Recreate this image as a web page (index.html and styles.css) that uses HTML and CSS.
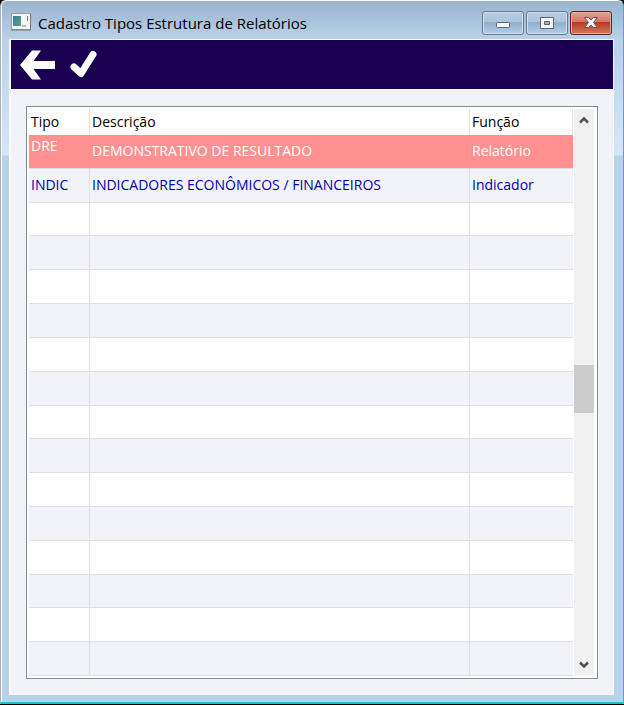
FILE: index.html
```html
<!DOCTYPE html>
<html lang="pt-BR">
<head>
<meta charset="utf-8">
<title>Cadastro Tipos Estrutura de Relatórios</title>
<link rel="stylesheet" href="styles.css">
</head>
<body>
<div class="window">
  <header class="titlebar">
    <svg class="app-icon" width="20" height="18" viewBox="0 0 20 18" aria-hidden="true">
      <rect x="0.5" y="0.5" width="19" height="16" fill="#f4f6f6" stroke="#9a9ea2"/>
      <path d="M0 17h20M19.500 1v16" stroke="#74787c"/>
      <defs><linearGradient id="pic" x2="1" y2="1"><stop stop-color="#3c78a0"/><stop offset="1" stop-color="#58a878"/></linearGradient></defs>
      <rect x="2" y="3" width="8" height="10" fill="url(#pic)"/>
      <path d="M16.500 3v5" stroke="#3f8fa0"/>
      <path d="M11 13h4" stroke="#b9bdbd" stroke-width="2"/>
    </svg>
    <h1 class="title">Cadastro Tipos Estrutura de Relatórios</h1>
    <div class="controls">
      <button class="control" aria-label="Minimizar">
        <svg width="16" height="14" viewBox="0 0 16 14"><rect x="1.500" y="6.500" width="13" height="5" rx="1" fill="#f5f5f5" stroke="#596675"/></svg>
      </button>
      <button class="control" aria-label="Maximizar">
        <svg width="16" height="14" viewBox="0 0 16 14"><path fill-rule="evenodd" d="M1.500 1.500h13v11h-13zM5.500 5.500v3h5v-3z" fill="#f5f5f5" stroke="#596675"/></svg>
      </button>
      <button class="control close" aria-label="Fechar">
        <svg width="16" height="14" viewBox="0 0 16 14"><path d="M1.500 1.500h4L8 4l2.500-2.500h4L10.500 6.500l4 5h-4L8 9l-2.500 2.500h-4l4-5z" fill="#f7f5f5" stroke="#62545c"/></svg>
      </button>
    </div>
  </header>
  <main class="client">
    <nav class="toolbar">
      <button class="tool" aria-label="Voltar">
        <svg width="36" height="30" viewBox="0 0 36 30"><path d="M0 15 12 .5h9L13.500 11H35v8H13.500L21 29.500h-9z" fill="#fff"/></svg>
      </button>
      <button class="tool" aria-label="Confirmar">
        <svg width="30" height="30" viewBox="0 0 30 30"><path d="M6 17 13 23.500 25 4.500" fill="none" stroke="#fff" stroke-width="7" stroke-linecap="round" stroke-linejoin="round"/></svg>
      </button>
    </nav>
    <section class="list">
      <table class="grid">
        <thead><tr><th class="type">Tipo</th><th>Descrição</th><th class="role">Função</th></tr></thead>
        <tbody>
          <tr class="selected"><td class="raised">DRE</td><td>DEMONSTRATIVO DE RESULTADO</td><td>Relatório</td></tr>
          <tr><td>INDIC</td><td>INDICADORES ECONÔMICOS / FINANCEIROS</td><td>Indicador</td></tr>
          <tr><td></td><td></td><td></td></tr>
          <tr><td></td><td></td><td></td></tr>
          <tr><td></td><td></td><td></td></tr>
          <tr><td></td><td></td><td></td></tr>
          <tr><td></td><td></td><td></td></tr>
          <tr><td></td><td></td><td></td></tr>
          <tr><td></td><td></td><td></td></tr>
          <tr><td></td><td></td><td></td></tr>
          <tr><td></td><td></td><td></td></tr>
          <tr><td></td><td></td><td></td></tr>
          <tr><td></td><td></td><td></td></tr>
          <tr><td></td><td></td><td></td></tr>
          <tr><td></td><td></td><td></td></tr>
          <tr><td></td><td></td><td></td></tr>
        </tbody>
      </table>
      <div class="scrollbar">
        <button class="arrow" aria-label="Rolar para cima">
          <svg width="12" height="10" viewBox="0 0 12 10"><path d="M2 7.500 6 3.500l4 4" fill="none" stroke="#505050" stroke-width="2.500"/></svg>
        </button>
        <div class="track"><div class="space before"></div><div class="thumb"></div><div class="space after"></div></div>
        <button class="arrow" aria-label="Rolar para baixo">
          <svg width="12" height="10" viewBox="0 0 12 10"><path d="M2 2.500 6 6.500l4-4" fill="none" stroke="#505050" stroke-width="2.500"/></svg>
        </button>
      </div>
    </section>
  </main>
</div>
</body>
</html>
```
FILE: styles.css
```css
* { box-sizing: border-box; }
body {
  margin: 0;
  min-height: 100vh;
  display: flex;
  background: #000;
  border-bottom: 1px solid #000;
  font-family: "Open Sans", "Noto Sans", sans-serif;
  font-size: 14px;
}
button { border: 0; padding: 0; background: none; }
svg { display: block; }
.window {
  flex: 1;
  display: flex;
  flex-direction: column;
  padding: 0 9px 7px 8px;
  border: 1px solid #fff;
  border-right-color: #20bfd8;
  border-bottom: 2px solid #20bfd8;
  border-left: 1px solid #a9b1b8;
  border-radius: 6px 6px 0 0;
  box-shadow: inset 1px 0 #f4f9fd;
  background: linear-gradient(#9ab4cf 0, #b9d0e8 38px, #d8e6f4 154px, #b9d1ea 155px);
}
.titlebar {
  height: 38px;
  display: flex;
  align-items: center;
  padding: 6px 2px 0;
}
.app-icon { margin-bottom: 2px; }
.title {
  flex: 1;
  margin: 0 0 0 7px;
  font-size: 15px;
  font-weight: 400;
}
.controls { display: flex; gap: 2px; align-self: flex-start; padding-top: 4px; }
.control {
  width: 42px;
  height: 24px;
  display: grid;
  place-items: center;
  border: 1px solid #66788f;
  border-radius: 3px;
  box-shadow: inset 0 0 0 1px #d3e2f1;
  background: linear-gradient(#b8cde2 0, #abc3dc 45%, #91aecb 46%, #b3cde6 100%);
}
.close {
  border-color: #5b2832;
  box-shadow: inset 0 0 0 1px #e3aaa0;
  background: linear-gradient(#e3a596 0, #d4755f 45%, #b83920 46%, #d5795b 100%);
}
.client {
  flex: 1;
  display: flex;
  flex-direction: column;
  border: 1px solid #f8fafc;
  border-left-width: 2px;
  background: #f2f3f9;
}
.toolbar {
  height: 50px;
  display: flex;
  align-items: center;
  gap: 12px;
  padding: 0 9px;
  background: #1a0051;
  border-bottom: 1px solid #fff;
}
.list {
  flex: 1;
  display: flex;
  margin: 16px 15px 15px;
  padding: 2px 3px 2px 2px;
  border: 1px solid #868a91;
  background: #fff;
}
.grid {
  flex: 1;
  table-layout: fixed;
  border-collapse: separate;
  border-spacing: 0;
  color: #0000a8;
}
.grid th, .grid td {
  height: 33px;
  padding: 0 2px;
  border-right: 1px solid #e0e0e0;
  border-bottom: 1px solid #e0e0e0;
  text-align: left;
  white-space: nowrap;
  line-height: 18px;
}
.grid th {
  height: 26px;
  border-bottom: 0;
  color: #000;
  font-weight: 400;
}
.type { width: 61px; }
.role { width: 103px; }
.grid td:last-child { border-right: 0; }
.grid tbody tr:nth-child(even) { background: #f2f3f9; }
.grid .selected { background: #ff9090; color: #fff; }
.grid .selected td { border-right-color: #ff9090; }
.grid .raised { vertical-align: top; padding-top: 2px; }
.scrollbar {
  width: 20px;
  display: flex;
  flex-direction: column;
  margin-left: 1px;
  background: #f0f0f0;
}
.arrow { height: 22px; display: grid; place-items: center; }
.track { flex: 1; display: flex; flex-direction: column; }
.before { flex: 234; }
.after { flex: 241; }
.thumb { height: 48px; background: #cdcdcd; }
```
